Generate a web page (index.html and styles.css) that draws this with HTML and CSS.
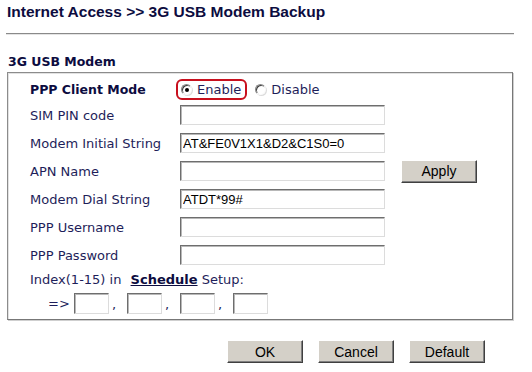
FILE: index.html
```html
<!DOCTYPE html>
<html lang="en">
<head>
    <meta charset="UTF-8">
    <title>3G USB Modem Backup</title>
    <link rel="stylesheet" href="styles.css">
</head>
<body>
    <h1 class="page-title">Internet Access &gt;&gt; 3G USB Modem Backup</h1>
    <div class="title-rule"></div>

    <div class="section-title">3G USB Modem</div>
    <div class="panel">
        <div class="row">
            <span class="label strong">PPP Client Mode</span>
            <div class="field radios">
                <label class="radio-opt highlight"><input type="radio" name="ppp" checked> Enable</label>
                <label class="radio-opt"><input type="radio" name="ppp"> Disable</label>
            </div>
        </div>
        <div class="row">
            <span class="label">SIM PIN code</span>
            <div class="field"><input class="text" type="text"></div>
        </div>
        <div class="row">
            <span class="label">Modem Initial String</span>
            <div class="field"><input class="text" type="text" value="AT&amp;FE0V1X1&amp;D2&amp;C1S0=0"></div>
        </div>
        <div class="row">
            <span class="label">APN Name</span>
            <div class="field">
                <input class="text" type="text">
                <button class="btn apply">Apply</button>
            </div>
        </div>
        <div class="row">
            <span class="label">Modem Dial String</span>
            <div class="field"><input class="text" type="text" value="ATDT*99#"></div>
        </div>
        <div class="row">
            <span class="label">PPP Username</span>
            <div class="field"><input class="text" type="text"></div>
        </div>
        <div class="row">
            <span class="label">PPP Password</span>
            <div class="field"><input class="text" type="password"></div>
        </div>
        <div class="index-row">Index(1-15) in <a href="#" class="sched">Schedule</a> Setup:</div>
        <div class="sched-row">
            <span class="arrow">=&gt;</span>
            <input class="small" type="text"><span class="comma">,</span>
            <input class="small" type="text"><span class="comma">,</span>
            <input class="small" type="text"><span class="comma">,</span>
            <input class="small" type="text">
        </div>
    </div>

    <div class="actions">
        <button class="btn">OK</button>
        <button class="btn">Cancel</button>
        <button class="btn">Default</button>
    </div>
</body>
</html>
```

FILE: styles.css
```css
body {
    margin: 0;
    background: #fff;
    font-family: "DejaVu Sans", Verdana, sans-serif;
    font-size: 13px;
    color: #1e1e5a;
}

.page-title {
    margin: 0;
    padding: 3px 0 0 7px;
    height: 25px;
    box-sizing: border-box;
    font-family: "Liberation Sans", Arial, sans-serif;
    font-size: 15.5px;
    font-weight: bold;
    color: #0c0c40;
}

.title-rule {
    margin: 8px 18px 0 6px;
    border-top: 1px solid #8a8a8a;
    border-bottom: 1px solid #e4e4e4;
}

.section-title {
    margin: 19px 0 0 8px;
    height: 15px;
    font-weight: bold;
    font-size: 12.5px;
    color: #0c0c40;
}

.panel {
    margin: 3px 19px 0 7px;
    height: 248px;
    box-sizing: border-box;
    border: 1px solid #8c8c8c;
    border-right-color: #777;
    border-bottom-color: #777;
    box-shadow: inset 1px 1px 0 #e2e2e2, 1px 1px 0 #cfcfcf;
    padding: 4px 0 0 22px;
}

.row {
    display: flex;
    align-items: center;
    height: 28px;
}
.row:first-child {
    height: 24px;
}

.label {
    width: 150px;
    flex-shrink: 0;
}
.label.strong {
    font-weight: bold;
    font-size: 12.5px;
    color: #0c0c40;
}

.field {
    display: flex;
    align-items: center;
}

.radios {
    margin-left: -4px;
}

.radio-opt {
    display: flex;
    align-items: center;
    height: 17px;
    padding: 0 4px 0 5px;
    margin-right: 3px;
}
.radio-opt.highlight {
    border: 2px solid #c8101e;
    border-radius: 6px;
    padding: 0 4px 0 3px;
}

.radio-opt input {
    appearance: none;
    -webkit-appearance: none;
    width: 11px;
    height: 11px;
    margin: 0 5px 0 0;
    border-radius: 50%;
    border: 1px solid;
    border-color: #888 #fafafa #fafafa #888;
    background: #fff;
    box-shadow: inset 1px 1px 0 #404040, 1px 1px 0 #dcdcdc;
    position: relative;
}
.radio-opt input:checked::after {
    content: '';
    position: absolute;
    left: 3px;
    top: 3px;
    width: 4px;
    height: 4px;
    border-radius: 50%;
    background: #000;
}

.text {
    width: 205px;
    height: 20px;
    box-sizing: border-box;
    margin: 0;
    padding: 0 2px;
    border: 1px solid;
    border-color: #6e6e6e #dcdcdc #dcdcdc #6e6e6e;
    box-shadow: inset 1px 1px 0 #b8b8b8;
    font-family: "Liberation Sans", Arial, sans-serif;
    font-size: 13px;
    color: #000;
    background: #fff;
}

.btn {
    width: 76px;
    height: 23px;
    box-sizing: border-box;
    padding: 0;
    background: #d4d0c8;
    border: 1px solid;
    border-color: #fff #404040 #404040 #fff;
    box-shadow: inset -1px -1px 0 #808080;
    font-family: "Liberation Sans", Arial, sans-serif;
    font-size: 14px;
    color: #000;
}

.apply {
    margin-left: 16px;
}

.index-row {
    height: 22px;
    line-height: 22px;
}
.index-row .sched {
    margin-left: 5px;
    font-weight: bold;
    color: #0c0c40;
}

.sched-row {
    display: flex;
    align-items: center;
    height: 24px;
}

.arrow {
    margin-left: 18px;
    width: 26px;
}

.small {
    width: 35px;
    height: 21px;
    box-sizing: border-box;
    margin: 0;
    border: 1px solid;
    border-color: #6e6e6e #dcdcdc #dcdcdc #6e6e6e;
    box-shadow: inset 1px 1px 0 #b8b8b8;
    background: #fff;
}

.comma {
    width: 18px;
    padding-left: 3px;
    box-sizing: border-box;
    align-self: flex-end;
    margin-bottom: 3px;
}

.actions {
    display: flex;
    justify-content: flex-end;
    gap: 15px;
    margin: 20px 47px 0 0;
}
```
